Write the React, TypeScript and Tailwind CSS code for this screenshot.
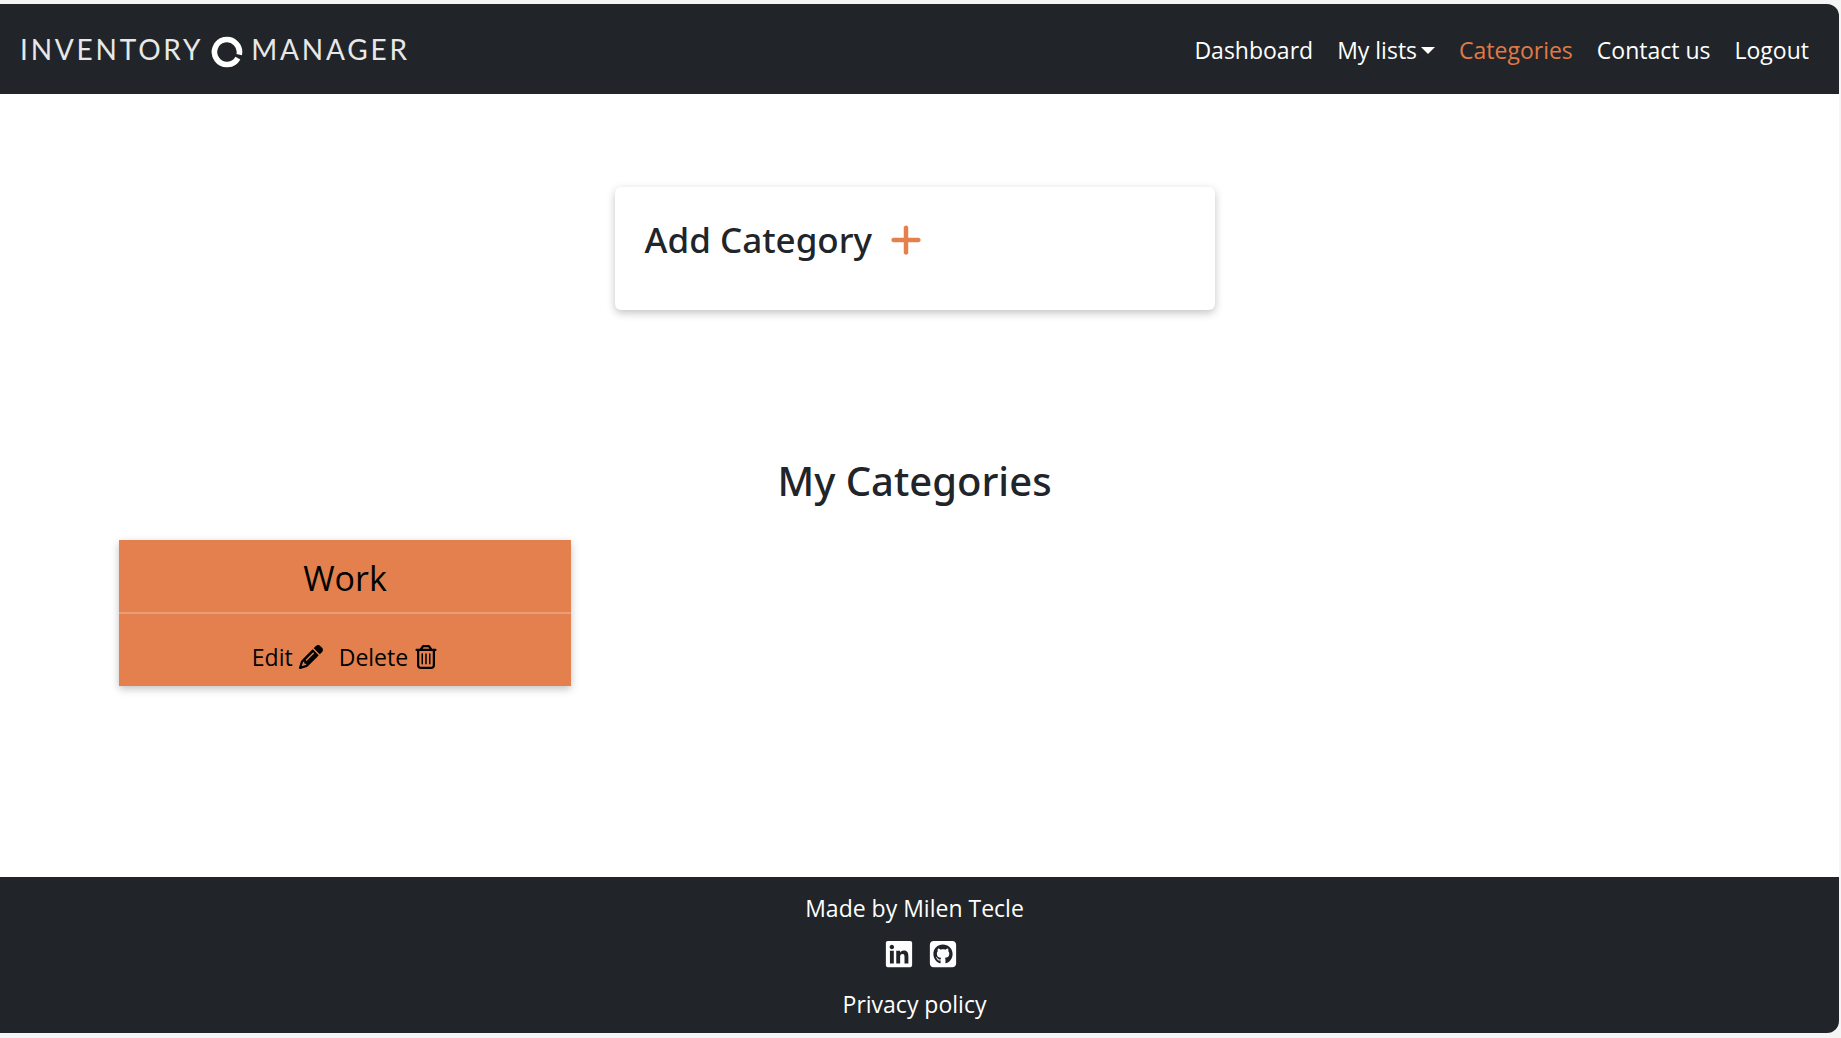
import { FaLinkedin, FaPencil, FaPlus, FaRegTrashCan, FaSquareGithub } from "react-icons/fa6";

function Logo() {
  return (
    <a href="#" aria-label="Inventory Manager" className="flex items-center gap-2 font-['Lato'] text-[28px] leading-8 tracking-widest text-[#e8e8e8]">
      <span>INVENTORY</span>
      <svg viewBox="0 0 32 32" className="mt-1.5 size-8" fill="none" stroke="white" strokeWidth="5.6">
        <path d="M28.2 18.6A12.5 12.5 0 1 0 26.9 22.1" />
      </svg>
      <span>MANAGER</span>
    </a>
  );
}

function Header() {
  return (
    <header className="flex h-[90px] items-center justify-between rounded-tr-xl bg-[#212529] pl-5 pr-[30px]">
      <Logo />
      <nav className="flex items-center gap-6 pt-0.5 text-[23px] text-white">
        <a href="#">Dashboard</a>
        <button type="button" className="flex items-center gap-1">
          My lists
          <span className="border-x-[7px] border-t-[7px] border-x-transparent border-t-white" />
        </button>
        <a href="#" className="text-[#e07a45]">Categories</a>
        <a href="#">Contact us</a>
        <a href="#">Logout</a>
      </nav>
    </header>
  );
}

function CategoryCard({ name }: { name: string }) {
  return (
    <article className="w-[452px] bg-[#e3804d] text-center text-black shadow-[0_3px_8px_rgba(0,0,0,0.24)]">
      <h3 className="border-b-2 border-[#eb9d77] pb-3.5 pt-[18px] text-[34px] leading-10">{name}</h3>
      <div className="flex items-center justify-center gap-4 pb-[13px] pt-[27px] text-[23px] leading-8">
        <button type="button" className="flex items-center gap-1.5">
          Edit <FaPencil className="h-6 w-auto" />
        </button>
        <button type="button" className="flex items-center gap-1.5">
          Delete <FaRegTrashCan viewBox="0 0 448 512" className="h-6 w-auto" />
        </button>
      </div>
    </article>
  );
}

export default function App() {
  return (
    <div className="flex min-h-screen flex-col bg-[#f5f5f5] pb-[5px] pr-[2px] pt-1 font-['Open_Sans',sans-serif]">
      <Header />
      <main className="grow bg-white pr-2.5 pt-[93px]">
        <section className="mx-auto h-[123px] w-[600px] rounded-md px-[30px] pt-8 shadow-[0_3px_8px_rgba(0,0,0,0.24)]">
          <h2 className="flex items-center gap-4 font-['Noto_Sans'] text-[35px] font-medium leading-[42px] text-[#212529]">
            Add Category
            <button type="button" aria-label="Add category" className="text-4xl text-[#e3804d]">
              <FaPlus />
            </button>
          </h2>
        </section>
        <h1 className="mt-[145px] text-center font-['Noto_Sans'] text-[40px] font-medium leading-[52px] text-[#212529]">My Categories</h1>
        <section className="mt-[33px] pl-[119px]">
          <CategoryCard name="Work" />
        </section>
      </main>
      <footer className="flex flex-col items-center rounded-br-xl bg-[#212529] pb-[13px] pr-2.5 pt-[15px] text-[23px] leading-8 text-white">
        <p>Made by Milen Tecle</p>
        <div className="mt-[15px] flex gap-3.5 pl-3 text-[30px]">
          <a href="#" aria-label="LinkedIn"><FaLinkedin /></a>
          <a href="#" aria-label="GitHub"><FaSquareGithub /></a>
        </div>
        <a href="#" className="mt-[19px]">Privacy policy</a>
      </footer>
    </div>
  );
}
